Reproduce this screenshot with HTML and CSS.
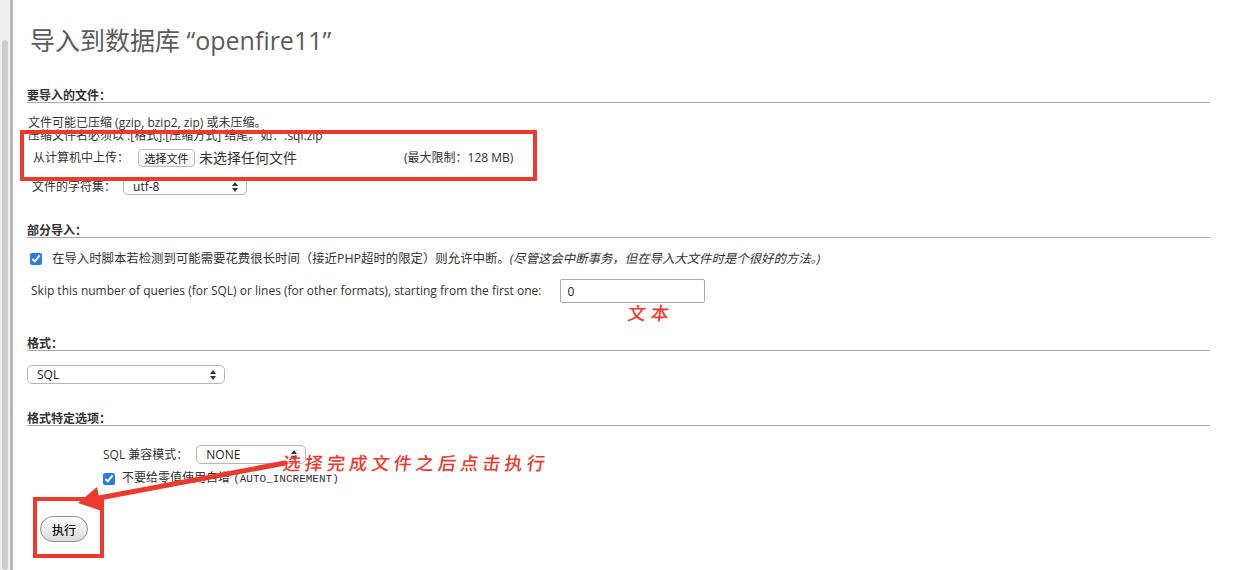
FILE: index.html
```html
<!DOCTYPE html>
<html lang="zh-CN">
<head>
    <meta charset="UTF-8">
    <title>导入 | openfire11</title>
    <link rel="stylesheet" href="styles.css">
</head>
<body>
    <div class="page">
        <div class="rail"><div class="thumb"></div></div>
        <main class="content">
            <h2 class="title">导入到数据库 “openfire11”</h2>

            <section class="group files">
                <h3 class="legend">要导入的文件：</h3>
                <p class="note">文件可能已压缩 (gzip, bzip2, zip) 或未压缩。<br>压缩文件名必须以 .[格式].[压缩方式] 结尾。如：.sql.zip</p>
                <div class="row upload">
                    <span>从计算机中上传：</span>
                    <button class="file-btn" type="button">选择文件</button>
                    <span class="file-name">未选择任何文件</span>
                    <span class="limit">(最大限制：128 MB)</span>
                </div>
                <div class="row charset">
                    <span>文件的字符集：</span>
                    <span class="select sel-charset">utf-8
                        <svg class="updown" width="6" height="10" viewBox="0 0 6 10"><path d="M3 0 L6 4 H0 Z M0 6 H6 L3 10 Z" fill="#333"/></svg>
                    </span>
                </div>
            </section>

            <section class="group partial">
                <h3 class="legend">部分导入：</h3>
                <label class="row check">
                    <input type="checkbox" checked>
                    <span>在导入时脚本若检测到可能需要花费很长时间（接近PHP超时的限定）则允许中断。<i>(尽管这会中断事务，但在导入大文件时是个很好的方法。)</i></span>
                </label>
                <div class="row skip">
                    <span>Skip this number of queries (for SQL) or lines (for other formats), starting from the first one:</span>
                    <input class="skip-input" type="text" value="0">
                </div>
            </section>

            <section class="group format">
                <h3 class="legend">格式：</h3>
                <div class="row fmt-row">
                    <span class="select sel-format">SQL
                        <svg class="updown" width="6" height="10" viewBox="0 0 6 10"><path d="M3 0 L6 4 H0 Z M0 6 H6 L3 10 Z" fill="#333"/></svg>
                    </span>
                </div>
            </section>

            <section class="group options">
                <h3 class="legend">格式特定选项：</h3>
                <div class="row compat">
                    <span>SQL 兼容模式：</span>
                    <span class="select sel-compat">NONE
                        <svg class="updown" width="6" height="10" viewBox="0 0 6 10"><path d="M3 0 L6 4 H0 Z M0 6 H6 L3 10 Z" fill="#333"/></svg>
                    </span>
                </div>
                <label class="row check zero">
                    <input type="checkbox" checked>
                    <span>不要给零值使用自增 <code>(AUTO_INCREMENT)</code></span>
                </label>
            </section>

            <div class="actions">
                <button class="go-btn" type="button">执行</button>
            </div>
        </main>

        <!-- 标注层 -->
        <svg class="marks" width="1240" height="570" viewBox="0 0 1240 570">
            <rect x="22" y="132" width="513" height="47" fill="none" stroke="#ec3a2f" stroke-width="4"/>
            <rect x="35" y="499" width="67" height="57" fill="none" stroke="#ec3a2f" stroke-width="4"/>
            <path d="M285 463 L99 498" stroke="#ec3a2f" stroke-width="5" stroke-linecap="round"/>
            <polygon points="78,503 97,487 102,511" fill="#ec3a2f"/>
        </svg>
        <span class="hand hand-text">文本</span>
        <span class="hand hand-tip">选择完成文件之后点击执行</span>
    </div>
</body>
</html>
```

FILE: styles.css
```css
body {
    margin: 0;
    background: #fff;
    font-family: "Open Sans", "Noto Sans CJK SC", sans-serif;
    font-size: 12px;
    color: #333;
}
.page {
    position: relative;
    display: flex;
    width: 1240px;
    height: 570px;
    overflow: hidden;
}
.rail {
    width: 10px;
    background: #efefef;
    border-right: 3px solid #b9b9b9;
    padding-top: 40px;
}
.thumb {
    margin-left: 2px;
    width: 6px;
    height: 530px;
    background: #cfcfcf;
    border-radius: 3px;
}
.content {
    flex: 1;
    padding: 0 30px 0 14px;
}
.title {
    margin: 24px 0 0 3px;
    font-size: 25px;
    line-height: 32px;
    font-weight: 400;
    color: #5b5b5b;
}
.legend {
    margin: 0;
    font-size: 12px;
    font-weight: 700;
    line-height: 13px;
    border-bottom: 1px solid #aaa;
    color: #333;
}
.files {
    margin-top: 33px;
}
.note {
    margin: 13px 0 0 1px;
    line-height: 13px;
}
.row {
    display: flex;
    align-items: center;
    line-height: 16px;
}
.upload {
    margin: 6px 0 0 6px;
    height: 20px;
}
.file-btn {
    margin-left: 9px;
    width: 57px;
    height: 18px;
    padding: 0;
    font: 11px "Noto Sans CJK SC", sans-serif;
    color: #222;
    background: linear-gradient(#fff, #f1f1f1);
    border: 1px solid #bdbdbd;
    border-radius: 4px;
}
.file-name {
    margin-left: 4px;
    font-size: 14px;
}
.limit {
    margin-left: 107px;
}
.charset {
    margin: 10px 0 0 5px;
}
.select {
    position: relative;
    display: flex;
    align-items: center;
    box-sizing: border-box;
    padding-left: 9px;
    border: 1px solid #b5b5b5;
    border-radius: 5px;
    background: #fff;
    color: #222;
}
.updown {
    position: absolute;
    right: 8px;
    top: 50%;
    margin-top: -5px;
}
.sel-charset {
    margin-left: 7px;
    width: 124px;
    height: 17px;
}
.partial {
    margin-top: 29px;
}
.check input {
    width: 12px;
    height: 12px;
    margin: 0 10px 0 0;
    accent-color: #2b7be4;
}
.partial .check {
    margin: 13px 0 0 3px;
    font-size: 12.4px;
}
.check i {
    font-style: italic;
}
.skip {
    margin: 12px 0 0 4px;
}
.skip-input {
    margin-left: 19px;
    width: 145px;
    height: 24px;
    box-sizing: border-box;
    padding: 0 6px;
    border: 1px solid #aaa;
    border-radius: 2px;
    font: 12px "Open Sans", sans-serif;
    color: #222;
}
.format {
    margin-top: 34px;
}
.fmt-row {
    margin-top: 14px;
}
.sel-format {
    width: 198px;
    height: 19px;
}
.options {
    margin-top: 28px;
}
.compat {
    margin: 19px 0 0 76px;
}
.sel-compat {
    margin-left: 8px;
    width: 110px;
    height: 19px;
}
.zero {
    margin: 6px 0 0 76px;
}
.zero input {
    margin-right: 7px;
}
code {
    font-family: "Liberation Mono", monospace;
    font-size: 11px;
}
.actions {
    margin: 29px 0 0 13px;
}
.go-btn {
    display: block;
    width: 48px;
    height: 26px;
    padding: 0;
    font: 500 12px "Noto Sans CJK SC", sans-serif;
    color: #111;
    background: linear-gradient(#fdfdfd, #dcdcdc);
    border: 1px solid #8f8f8f;
    border-radius: 13px;
}
.marks {
    position: absolute;
    left: 0;
    top: 0;
    pointer-events: none;
}
.hand {
    position: absolute;
    color: #ec3a2f;
    font-family: "Noto Sans CJK SC", serif;
    font-weight: 500;
    transform: skewX(-8deg);
}
.hand-text {
    left: 628px;
    top: 299px;
    font-size: 18px;
    letter-spacing: 5px;
}
.hand-tip {
    left: 283px;
    top: 449px;
    font-size: 18px;
    letter-spacing: 4.2px;
}
```
